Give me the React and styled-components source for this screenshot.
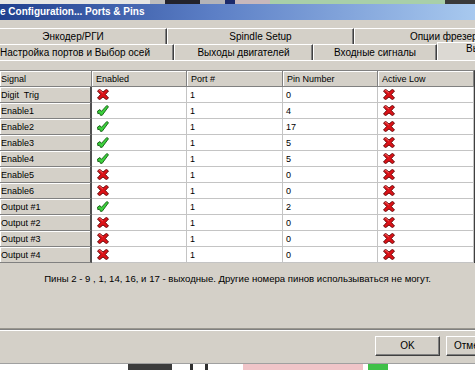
import React from 'react'
import styled, { createGlobalStyle } from 'styled-components'

const GlobalStyle = createGlobalStyle`
  html, body {
    margin: 0;
    padding: 0;
    background: #fff;
  }
  body {
    font-family: "Liberation Sans", Arial, sans-serif;
    color: #000;
  }
`

const Screen = styled.div`
  width: 475px;
  height: 377px;
  overflow: hidden;
  display: flex;
  flex-direction: column;
  background: #fff;
`

const TopStrip = styled.div`
  height: 4px;
  display: flex;
  flex-shrink: 0;
`

const StripBlock = styled.div`
  width: ${({ w }) => w}px;
  background: ${({ c }) => c};
  flex-shrink: 0;
`

const TitleBar = styled.div`
  height: 16px;
  flex-shrink: 0;
  background: linear-gradient(to right, #20408f, #5c7fc6 45%, #a8c9ef);
  color: #fff;
  font-weight: bold;
  font-size: 10px;
  line-height: 16px;
  white-space: nowrap;
`

const Dialog = styled.div`
  background: #d4d0c8;
  display: flex;
  flex-direction: column;
  padding-top: 8px;
  flex-shrink: 0;
`

const TabRow = styled.div`
  display: flex;
  height: 16px;
  align-items: flex-end;
  white-space: nowrap;
`

const Tab = styled.div`
  width: ${({ w }) => w}px;
  flex-shrink: 0;
  height: ${({ selected }) => (selected ? 18 : 16)}px;
  margin-top: ${({ selected }) => (selected ? -2 : 0)}px;
  box-sizing: border-box;
  padding-right: ${({ pr }) => pr || 0}px;
  padding-left: ${({ pl }) => pl || 0}px;
  text-align: ${({ selected }) => (selected ? 'left' : 'center')};
  font-size: 10px;
  line-height: ${({ selected }) => (selected ? 12 : 16)}px;
  border-top: 1px solid #fff;
  border-left: ${({ first }) => (first ? 'none' : '1px solid #fff')};
  border-right: 1px solid #404040;
  box-shadow: inset -1px 0 #808080;
  background: ${({ selected }) => (selected ? '#dcd9d3' : '#d4d0c8')};
  overflow: hidden;
  position: relative;
  z-index: ${({ selected }) => (selected ? 1 : 0)};
`

const Panel = styled.div`
  border-top: 1px solid #fff;
  padding-top: 9px;
  display: flex;
  flex-direction: column;
`

const GridWrap = styled.div`
  height: 193px;
  overflow: hidden;
  border-top: 1px solid #808080;
  width: 475px;
  box-sizing: border-box;
  border-right: 1px solid #404040;
`

const Grid = styled.div`
  display: grid;
  grid-template-columns: 92px 95px 96px 95px 96px;
  grid-auto-rows: 16px;
  font-size: 9px;
`

const HeadCell = styled.div`
  background: #d4d0c8;
  box-sizing: border-box;
  border-right: 1px solid #808080;
  border-bottom: 1px solid #808080;
  box-shadow: inset 1px 1px #fff;
  padding-left: ${({ side }) => (side ? 1 : 4)}px;
  line-height: 16px;
  white-space: pre;
  overflow: hidden;
`

const SideCell = styled(HeadCell)`
  border-right: 2px solid #505050;
`

const Cell = styled.div`
  background: #fff;
  box-sizing: border-box;
  border-right: 1px solid #c4c4c4;
  border-bottom: 1px solid #c4c4c4;
  padding-left: ${({ icon }) => (icon ? 5 : 3)}px;
  line-height: 16px;
  display: flex;
  align-items: center;
`

const Note = styled.div`
  height: 65px;
  box-sizing: border-box;
  padding-top: 10px;
  font-size: 9.6px;
  line-height: 12px;
  text-align: center;
  white-space: nowrap;
`

const Groove = styled.div`
  height: 1px;
  background: #808080;
  border-top: 1px solid #9a978f;
  border-bottom: 1px solid #fff;
`

const ButtonRow = styled.div`
  height: 32px;
  box-sizing: border-box;
  padding-top: 5px;
  display: flex;
  gap: 6px;
  justify-content: flex-end;
  margin-right: -36px;
`

const Button = styled.div`
  width: 65px;
  height: 20px;
  box-sizing: border-box;
  border: 1px solid;
  border-color: #fff #404040 #404040 #fff;
  box-shadow: inset -1px -1px #808080;
  font-size: 10px;
  line-height: 18px;
  text-align: ${({ left }) => (left ? 'left' : 'center')};
  padding-left: ${({ left }) => (left ? 7 : 0)}px;
`

const BottomStrip = styled.div`
  display: flex;
  height: 6px;
  border-top: 1px solid #a0a0a0;
`

const RedX = () => (
  <svg width="12" height="11" viewBox="0 0 12 11">
    <path
      d="M0.5,2 L2.6,0.3 L6,3 L9.4,0.3 L11.5,2 L8.4,5.5 L11.5,9 L9.4,10.7 L6,8 L2.6,10.7 L0.5,9 L3.6,5.5 Z"
      fill="#dc1218"
      stroke="#5e0000"
      strokeWidth="0.9"
      strokeLinejoin="round"
    />
    <path d="M1.8,2 L2.7,1.3 L5.8,3.9" stroke="#ff7070" strokeWidth="0.9" fill="none" />
  </svg>
)

const GreenCheck = () => (
  <svg width="12" height="11" viewBox="0 0 12 11">
    <path
      d="M0.6,6 L3,4.6 L4.4,6.4 L9.8,0.5 L11.5,1.7 L5.2,10.3 L3.4,10.3 L2.6,8.3 L0.8,8.6 Z"
      fill="#3cd23c"
      stroke="#0e5a0e"
      strokeWidth="0.9"
      strokeLinejoin="round"
    />
  </svg>
)

// last row is cut off by the grid's bottom edge, only its icons peek in
const rows = [
  ['Digit  Trig', false, '1', '0'],
  ['Enable1', true, '1', '4'],
  ['Enable2', true, '1', '17'],
  ['Enable3', true, '1', '5'],
  ['Enable4', true, '1', '5'],
  ['Enable5', false, '1', '0'],
  ['Enable6', false, '1', '0'],
  ['Output #1', true, '1', '2'],
  ['Output #2', false, '1', '0'],
  ['Output #3', false, '1', '0'],
  ['Output #4', false, '1', '0'],
  ['', false, '', ''],
]

const strip = [
  [150, '#e6e6e4'], [15, '#bdbdbd'], [35, '#23232c'], [25, '#b4b4b8'],
  [10, '#1c2a6a'], [35, '#c8b8bc'], [175, '#a8cfa9'], [30, '#3a3a3a'],
]

const bottom = [
  [128, '#ffffff'], [44, '#3c3c3c'], [18, '#ffffff'], [3, '#303030'], [12, '#ffffff'],
  [3, '#303030'], [35, '#ffffff'], [120, '#f0c4c8'], [5, '#ffffff'], [20, '#40c048'], [87, '#ffffff'],
]

export default function App() {
  return (
    <Screen>
      <GlobalStyle />
      <TopStrip>
        {strip.map(([w, c], i) => <StripBlock key={i} w={w} c={c} />)}
      </TopStrip>
      <TitleBar>e Configuration... Ports &amp; Pins</TitleBar>
      <Dialog>
        <TabRow>
          <Tab w={167} pr={20} first>Энкодер/РГИ</Tab>
          <Tab w={187}>Spindle Setup</Tab>
          <Tab w={185}>Опции фрезера</Tab>
        </TabRow>
        <TabRow>
          <Tab w={174} pr={26} first>Настройка портов и Выбор осей</Tab>
          <Tab w={139}>Выходы двигателей</Tab>
          <Tab w={124}>Входные сигналы</Tab>
          <Tab w={120} pl={28} selected>Выходные сигналы</Tab>
        </TabRow>
        <Panel>
          <GridWrap>
            <Grid>
              <HeadCell side>Signal</HeadCell>
              <HeadCell>Enabled</HeadCell>
              <HeadCell>Port #</HeadCell>
              <HeadCell>Pin Number</HeadCell>
              <HeadCell>Active Low</HeadCell>
              {rows.map(([name, on, port, pin], i) => (
                <React.Fragment key={i}>
                  <SideCell side>{name}</SideCell>
                  <Cell icon>{on ? <GreenCheck /> : <RedX />}</Cell>
                  <Cell>{port}</Cell>
                  <Cell>{pin}</Cell>
                  <Cell icon><RedX /></Cell>
                </React.Fragment>
              ))}
            </Grid>
          </GridWrap>
          <Note>
            Пины 2 - 9 , 1, 14, 16, и 17 - выходные. Другие номера пинов использываться не могут.
          </Note>
        </Panel>
        <Groove />
        <ButtonRow>
          <Button>OK</Button>
          <Button left>Отмена</Button>
        </ButtonRow>
      </Dialog>
      <BottomStrip>
        {bottom.map(([w, c], i) => <StripBlock key={i} w={w} c={c} />)}
      </BottomStrip>
    </Screen>
  )
}
